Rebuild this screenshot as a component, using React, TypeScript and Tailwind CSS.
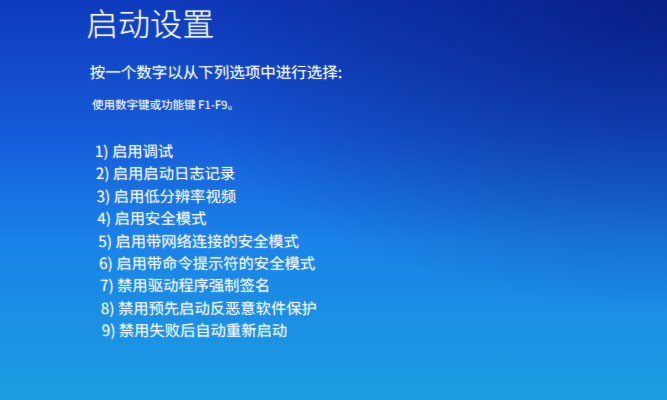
const options = [
  '启用调试',
  '启用启动日志记录',
  '启用低分辨率视频',
  '启用安全模式',
  '启用带网络连接的安全模式',
  '启用带命令提示符的安全模式',
  '禁用驱动程序强制签名',
  '禁用预先启动反恶意软件保护',
  '禁用失败后自动重新启动',
];

export default function App() {
  return (
    <div className="h-[400px] w-full overflow-hidden bg-[image:radial-gradient(ellipse_at_100%_0%,rgba(6,18,110,0.7),transparent_55%),linear-gradient(180deg,#0e3abd_0%,#1559d8_32%,#1a82e8_60%,#1b9de0_100%)] font-['Noto_Sans_CJK_SC','Noto_Sans',sans-serif] text-[#f2f6ff] [text-shadow:0_0_2px_rgba(255,255,255,0.35)]">
      <div className="origin-top-left skew-x-[2.2deg] pl-[85px]">
        <h1 className="text-[32px] font-light leading-[45px]">启动设置</h1>
        <p className="ml-[2px] mt-[14px] text-[15.5px] leading-[24px]">按一个数字以从下列选项中进行选择:</p>
        <p className="ml-[3px] mt-[13px] text-[11.5px] leading-[16px]">使用数字键或功能键 F1-F9。</p>
        <ol className="ml-[4px] mt-[27px] flex flex-col">
          {options.map((text, i) => (
            <li key={text} className="text-[15.3px] leading-[22.4px]">
              {i + 1}) {text}
            </li>
          ))}
        </ol>
      </div>
    </div>
  );
}
